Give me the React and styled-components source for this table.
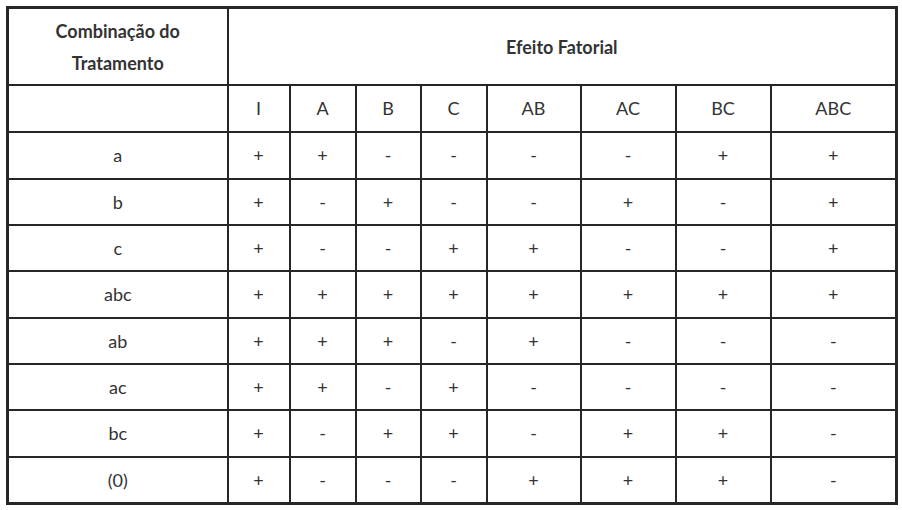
import styled, { createGlobalStyle } from "styled-components"

const GlobalStyle = createGlobalStyle`
    body {
        margin: 0;
        background: #fff;
        font-family: Lato, "Open Sans", sans-serif;
        color: #333;
    }
`

const Wrapper = styled.div`
    padding: 6px 0 0 6px;
`

const Table = styled.table`
    border-collapse: collapse;
    table-layout: fixed;
    width: 891px;
    border: 3px solid #262626;
    font-size: 18px;
`

const HeadCell = styled.th`
    border: 2px solid #262626;
    font-weight: 700;
    text-align: center;
    line-height: 32px;
    height: ${(p) => p.$h}px;
    padding: 1px ${(p) => p.$pad || 8}px 0;
    box-sizing: border-box;
`

const Cell = styled.td`
    border: 2px solid #262626;
    text-align: center;
    height: ${(p) => p.$h || 44}px;
    padding: 0;
    font-weight: 400;
    color: #333;
`

const widths = [220, 62, 66, 65, 66, 94, 95, 95, 126]
const effects = ["I", "A", "B", "C", "AB", "AC", "BC", "ABC"]
// alternating heights so the grid lines land where the original's do
const rowHeights = [45, 44, 44, 45, 44, 44, 45, 44]

const data = [
    ["a", ["+", "+", "-", "-", "-", "-", "+", "+"]],
    ["b", ["+", "-", "+", "-", "-", "+", "-", "+"]],
    ["c", ["+", "-", "-", "+", "+", "-", "-", "+"]],
    ["abc", ["+", "+", "+", "+", "+", "+", "+", "+"]],
    ["ab", ["+", "+", "+", "-", "+", "-", "-", "-"]],
    ["ac", ["+", "+", "-", "+", "-", "-", "-", "-"]],
    ["bc", ["+", "-", "+", "+", "-", "+", "+", "-"]],
    ["(0)", ["+", "-", "-", "-", "+", "+", "+", "-"]],
]

export default function App() {
    return (
        <Wrapper>
            <GlobalStyle />
            <Table>
                <colgroup>
                    {widths.map((w, i) => <col key={i} style={{ width: w }} />)}
                </colgroup>
                <thead>
                    <tr>
                        <HeadCell $h={77} $pad={30}>Combinação do Tratamento</HeadCell>
                        <HeadCell $h={77} colSpan={8}>Efeito Fatorial</HeadCell>
                    </tr>
                </thead>
                <tbody>
                    <tr>
                        <Cell $h={45}></Cell>
                        {effects.map((e) => <Cell key={e} $h={45}>{e}</Cell>)}
                    </tr>
                    {data.map(([name, signs], r) => (
                        <tr key={name}>
                            <Cell $h={rowHeights[r]}>{name}</Cell>
                            {signs.map((s, i) => <Cell key={i} $h={rowHeights[r]}>{s}</Cell>)}
                        </tr>
                    ))}
                </tbody>
            </Table>
        </Wrapper>
    )
}
